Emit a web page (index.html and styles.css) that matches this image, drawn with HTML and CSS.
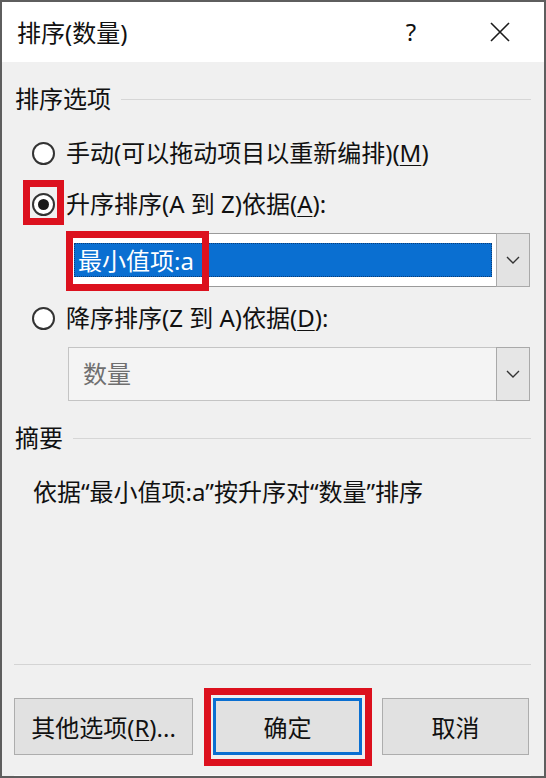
FILE: index.html
```html
<!DOCTYPE html>
<html lang="zh-CN">

<head>
    <meta charset="UTF-8">
    <meta name="viewport" content="width=device-width, initial-scale=1.0">
    <title>排序(数量)</title>
    <link rel="stylesheet" href="styles.css">
</head>

<body>

    <div class="dialog">
        <!-- 标题栏 -->
        <div class="titlebar">
            <span class="title">排序(数量)</span>
            <span class="help">?</span>
            <span class="close">
                <svg width="20" height="20" viewBox="0 0 20 20"><path d="M1 1 L19 19 M19 1 L1 19" stroke="#1a1a1a" stroke-width="1.6" fill="none"/></svg>
            </span>
        </div>

        <div class="content">
            <div class="group"><span>排序选项</span></div>

            <div class="radio-row first">
                <span class="radio"></span>
                <span>手动(可以拖动项目以重新编排)(<u>M</u>)</span>
            </div>

            <div class="radio-row">
                <span class="radio checked"></span>
                <span>升序排序(A 到 Z)依据(<u>A</u>):</span>
            </div>

            <div class="combo">
                <div class="combo-value"><span class="sel">最小值项:a</span></div>
                <div class="combo-btn">
                    <svg width="14" height="8" viewBox="0 0 14 8"><path d="M1 1 L7 7 L13 1" stroke="#333" stroke-width="1.4" fill="none"/></svg>
                </div>
            </div>

            <div class="radio-row">
                <span class="radio"></span>
                <span>降序排序(Z 到 A)依据(<u>D</u>):</span>
            </div>

            <div class="combo disabled">
                <div class="combo-value"><span class="text">数量</span></div>
                <div class="combo-btn">
                    <svg width="14" height="8" viewBox="0 0 14 8"><path d="M1 1 L7 7 L13 1" stroke="#333" stroke-width="1.4" fill="none"/></svg>
                </div>
            </div>

            <div class="group second"><span>摘要</span></div>

            <p class="summary">依据“最小值项:a”按升序对“数量”排序</p>
        </div>

        <div class="footer">
            <button class="btn more">其他选项(<u>R</u>)...</button>
            <button class="btn ok">确定</button>
            <button class="btn cancel">取消</button>
        </div>

        <!-- 红框标注 -->
        <div class="mark mark-radio"></div>
        <div class="mark mark-value"></div>
        <div class="mark mark-ok"></div>
    </div>

</body>

</html>
```

FILE: styles.css
```css
body { margin: 0; background: #fff; font-family: "Noto Sans", "Noto Sans CJK SC", sans-serif; color: #111; }
.dialog { position: relative; display: flex; flex-direction: column; width: 546px; height: 778px; box-sizing: border-box; border: 2px solid #5e5e5e; background: #f0f0f0; }

.titlebar { display: flex; align-items: center; height: 60px; padding: 0 24px 0 15px; background: #fff; }
.titlebar .title { font-size: 24px; line-height: 30px; margin-top: 2px; }
.titlebar .help { margin-left: auto; width: 40px; text-align: center; font-size: 24px; line-height: 30px; margin-right: 49px; }
.titlebar .close { display: flex; justify-content: center; width: 40px; }

.content { flex: 1; padding: 0 13px; font-size: 24px; }
.group { display: flex; align-items: center; gap: 10px; height: 30px; margin-top: 22px; line-height: 30px; }
.group::after { content: ""; flex: 1; border-top: 1px solid #d6d6d6; }
.group.second { margin-top: 22px; }

.radio-row { display: flex; align-items: center; gap: 11px; height: 36px; margin: 15px 0 0 17px; line-height: 36px; }
.radio-row.first { margin-top: 21px; }
.radio-row u { text-underline-offset: 3px; text-decoration-thickness: 1px; }
.radio { display: flex; justify-content: center; align-items: center; width: 23px; height: 23px; box-sizing: border-box; border: 2px solid #333; border-radius: 50%; background: #fff; }
.radio.checked::after { content: ""; width: 11px; height: 11px; border-radius: 50%; background: #1a1a1a; }

.combo { display: flex; height: 54px; box-sizing: border-box; margin: 11px 1px 0 53px; border: 1px solid #9a9a9a; background: #fff; }
.combo + .radio-row { margin-top: 13px; }
.combo-value { flex: 1; display: flex; padding: 9px 4px 9px 5px; }
.combo .sel { flex: 1; padding-left: 3px; line-height: 34px; color: #fff; background: #0a6fd1; border: 1px dotted #0c3e78; }
.combo .text { padding-left: 9px; line-height: 34px; color: #6f6f6f; }
.combo-btn { display: flex; justify-content: center; align-items: center; width: 32px; margin: -1px -1px -1px 0; border: 1px solid #a9a9a9; background: #e3e3e3; }
.combo.disabled { background: #f4f4f4; border-color: #c4c4c4; }
.combo.disabled .combo-btn { background: #e6e6e6; }

.summary { margin: 24px 0 0 18px; line-height: 30px; }

.footer { display: flex; gap: 20px; height: 112px; box-sizing: border-box; margin: 0 13px 0 12px; padding: 33px 0 21px; border-top: 1px solid #d4d4d4; box-shadow: 0 -1px 0 #fafafa inset; }
.btn { height: 57px; padding: 0; font-family: inherit; font-size: 24px; color: #111; background: #e1e1e1; border: 1px solid #adadad; }
.btn.more { width: 179px; }
.btn.ok { width: 149px; border: 3px solid #0a6fd1; }
.btn.cancel { width: 147px; }
.btn u { text-underline-offset: 3px; text-decoration-thickness: 1px; }

.mark { position: absolute; border: 7px solid #dc111e; box-sizing: border-box; }
.mark-radio { left: 21px; top: 178px; width: 41px; height: 45px; }
.mark-value { left: 64px; top: 229px; width: 143px; height: 60px; }
.mark-ok { left: 202px; top: 686px; width: 168px; height: 78px; }
```
